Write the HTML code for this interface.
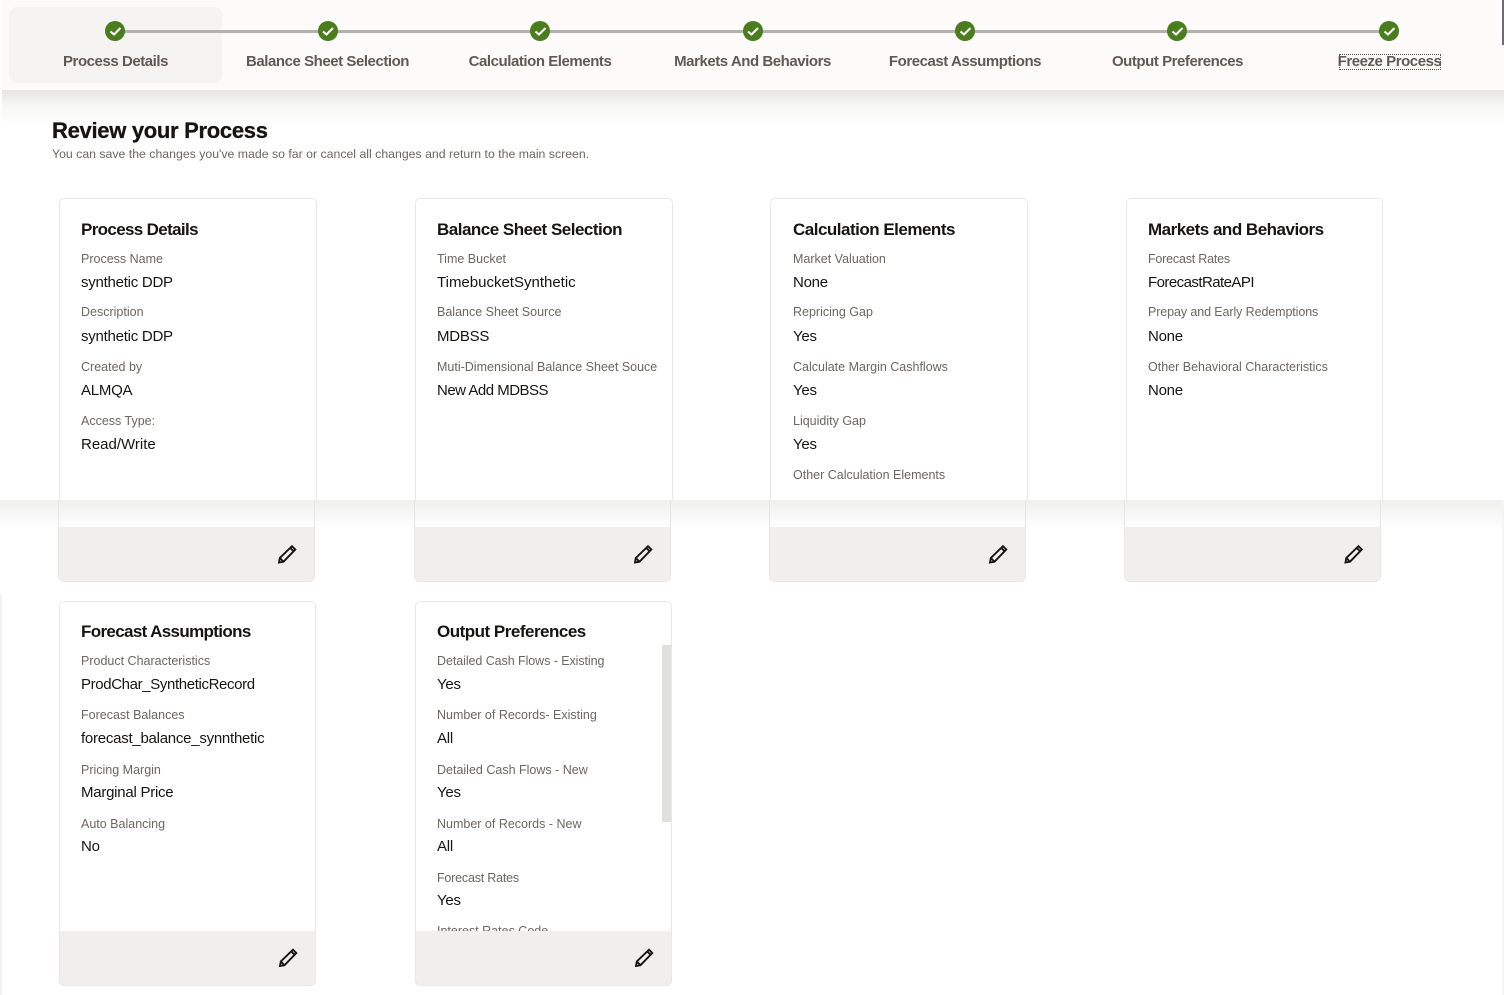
<!DOCTYPE html>
<html><head><meta charset="utf-8"><style>
html,body{margin:0;padding:0;background:#fff}
#p{position:relative;width:1504px;height:995px;overflow:hidden;background:#fff;font-family:"Liberation Sans",sans-serif}
#p div,#p svg{position:absolute}
.t{white-space:nowrap;height:20px;line-height:20px}
.s{font-size:15px;font-weight:bold;letter-spacing:-.45px;color:#5f5a56;text-align:center;width:212px;top:51px}
.h{font-size:17px;font-weight:bold;letter-spacing:-.5px;color:#161513;margin-top:1px}
.l{font-size:12.5px;color:#6b6762;margin-top:1px}
.v{font-size:15px;letter-spacing:-.25px;color:#161513;margin-top:1px}
.c{background:#fff;border:1px solid #e9e8e6;box-sizing:border-box}
.f{background:#f0efed;box-sizing:border-box;border:1px solid #e9e8e6;border-top:0}
.b{border:1px solid #e6e5e3;border-bottom:0;border-top:0;box-sizing:border-box}
.dot{width:20px;height:20px;border-radius:50%;background:#4a7d1e;top:21px}
</style></head><body><div id="p">
<!-- top shadow -->
<div style="left:2px;top:90px;width:1502px;height:36px;background:linear-gradient(#e6e5e4,#f6f6f5 40%,#fff)"></div>
<div style="left:2px;top:0;width:1502px;height:90px;background:#fcfbf9"></div>
<div style="left:1502px;top:0;width:2px;height:45px;background:#6a6a86"></div>
<div style="left:9px;top:7px;width:213px;height:76px;border-radius:8px;background:#f5f4f2"></div>
<div style="left:115px;top:30px;width:1274px;height:3px;background:#b3b1ae"></div>
<div class="dot" style="left:105px"></div><div class="dot" style="left:317.500px"></div><div class="dot" style="left:530px"></div><div class="dot" style="left:742.500px"></div><div class="dot" style="left:955px"></div><div class="dot" style="left:1167px"></div><div class="dot" style="left:1379px"></div>
<svg width="1504" height="60" style="left:0;top:0" fill="none" stroke="#fff" stroke-width="2"><path d="M110.500 31.500l3.500 3 6.500-6.500M323 31.500l3.500 3 6.500-6.500M535.500 31.500l3.500 3 6.500-6.500M748 31.500l3.500 3 6.500-6.500M960.500 31.500l3.500 3 6.500-6.500M1172.500 31.500l3.500 3 6.500-6.500M1384.500 31.500l3.500 3 6.500-6.500"/></svg>
<div class="t s" style="left:9.500px;margin-top:1px">Process Details</div>
<div class="t s" style="left:221.500px;margin-top:1px">Balance Sheet Selection</div>
<div class="t s" style="left:434px;margin-top:1px">Calculation Elements</div>
<div class="t s" style="left:646.500px;margin-top:1px">Markets And Behaviors</div>
<div class="t s" style="left:859px;margin-top:1px">Forecast Assumptions</div>
<div class="t s" style="left:1071.500px;margin-top:1px">Output Preferences</div>
<div class="t s" style="left:1283.500px;margin-top:1px">Freeze Process</div>
<div style="left:1339px;top:54px;width:102px;height:16px;border:1px dotted #555;box-sizing:border-box"></div>

<div class="t" style="left:52px;top:121px;font-size:22px;font-weight:bold;letter-spacing:-.3px;-webkit-text-stroke:.3px #161513;color:#161513">Review your Process</div>
<div class="t" style="left:52px;top:144px;font-size:12.300px;color:#6b6762">You can save the changes you've made so far or cancel all changes and return to the main screen.</div>

<!-- row 1 top -->
<div class="c" style="left:59px;top:198px;width:258px;height:320px;border-radius:5px 5px 0 0"></div>
<div class="c" style="left:415px;top:198px;width:258px;height:320px;border-radius:5px 5px 0 0"></div>
<div class="c" style="left:770px;top:198px;width:258px;height:320px;border-radius:5px 5px 0 0"></div>
<div class="c" style="left:1126px;top:198px;width:257px;height:320px;border-radius:5px 5px 0 0"></div>

<div class="t h" style="left:81px;top:219px;letter-spacing:-.65px">Process Details</div>
<div class="t l" style="left:81px;top:248px">Process Name</div><div class="t v" style="left:81px;top:272px">synthetic DDP</div>
<div class="t l" style="left:81px;top:302px;margin-top:0">Description</div><div class="t v" style="left:81px;top:326px">synthetic DDP</div>
<div class="t l" style="left:81px;top:357px;margin-top:0">Created by</div><div class="t v" style="left:81px;top:380px">ALMQA</div>
<div class="t l" style="left:81px;top:411px;margin-top:0">Access Type:</div><div class="t v" style="left:81px;top:434px;letter-spacing:0">Read/Write</div>

<div class="t h" style="left:437px;top:219px">Balance Sheet Selection</div>
<div class="t l" style="left:437px;top:248px">Time Bucket</div><div class="t v" style="left:437px;top:272px;letter-spacing:0">TimebucketSynthetic</div>
<div class="t l" style="left:437px;top:302px;margin-top:0">Balance Sheet Source</div><div class="t v" style="left:437px;top:326px">MDBSS</div>
<div class="t l" style="left:437px;top:357px;margin-top:0">Muti-Dimensional Balance Sheet Souce</div><div class="t v" style="left:437px;top:380px;letter-spacing:-.5px">New Add MDBSS</div>

<div class="t h" style="left:793px;top:219px">Calculation Elements</div>
<div class="t l" style="left:793px;top:248px">Market Valuation</div><div class="t v" style="left:793px;top:272px">None</div>
<div class="t l" style="left:793px;top:302px;margin-top:0">Repricing Gap</div><div class="t v" style="left:793px;top:326px">Yes</div>
<div class="t l" style="left:793px;top:357px;margin-top:0">Calculate Margin Cashflows</div><div class="t v" style="left:793px;top:380px">Yes</div>
<div class="t l" style="left:793px;top:411px;margin-top:0">Liquidity Gap</div><div class="t v" style="left:793px;top:434px">Yes</div>
<div class="t l" style="left:793px;top:465px;margin-top:0">Other Calculation Elements</div>

<div class="t h" style="left:1148px;top:219px">Markets and Behaviors</div>
<div class="t l" style="left:1148px;top:248px;letter-spacing:-.2px">Forecast Rates</div><div class="t v" style="left:1148px;top:272px;letter-spacing:-.55px">ForecastRateAPI</div>
<div class="t l" style="left:1148px;top:302px;margin-top:0;letter-spacing:-.1px">Prepay and Early Redemptions</div><div class="t v" style="left:1148px;top:326px">None</div>
<div class="t l" style="left:1148px;top:357px;margin-top:0">Other Behavioral Characteristics</div><div class="t v" style="left:1148px;top:380px">None</div>

<!-- seam band -->
<div style="left:0;top:500px;width:1504px;height:30px;background:linear-gradient(#efefee,#fbfbfb 70%,#fff)"></div>
<div class="b" style="left:58px;top:500px;width:257px;height:27px"></div>
<div class="b" style="left:414px;top:500px;width:257px;height:27px"></div>
<div class="b" style="left:769px;top:500px;width:257px;height:27px"></div>
<div class="b" style="left:1124px;top:500px;width:257px;height:27px"></div>
<div class="f" style="left:58px;top:527px;width:257px;height:55px;border-radius:0 0 6px 6px"></div>
<div class="f" style="left:414px;top:527px;width:257px;height:55px;border-radius:0 0 6px 6px"></div>
<div class="f" style="left:769px;top:527px;width:257px;height:55px;border-radius:0 0 6px 6px"></div>
<div class="f" style="left:1124px;top:527px;width:257px;height:55px;border-radius:0 0 6px 6px"></div>
<div style="left:0;top:594px;width:2px;height:401px;background:#f3f3f3"></div>
<div style="left:1502px;top:500px;width:2px;height:495px;background:#f4f4f4"></div>

<!-- row 2 -->
<div class="c" style="left:59px;top:601px;width:257px;height:385px;border-radius:5px"></div>
<div class="c" style="left:415px;top:601px;width:257px;height:385px;border-radius:5px"></div>

<div class="t h" style="left:81px;top:621px;letter-spacing:-.65px">Forecast Assumptions</div>
<div class="t l" style="left:81px;top:650px">Product Characteristics</div><div class="t v" style="left:81px;top:674px;letter-spacing:-.37px">ProdChar_SyntheticRecord</div>
<div class="t l" style="left:81px;top:704px">Forecast Balances</div><div class="t v" style="left:81px;top:728px">forecast_balance_synnthetic</div>
<div class="t l" style="left:81px;top:759px">Pricing Margin</div><div class="t v" style="left:81px;top:782px">Marginal Price</div>
<div class="t l" style="left:81px;top:813px">Auto Balancing</div><div class="t v" style="left:81px;top:836px">No</div>

<div class="t h" style="left:437px;top:621px">Output Preferences</div>
<div class="t l" style="left:437px;top:650px;letter-spacing:-.07px">Detailed Cash Flows - Existing</div><div class="t v" style="left:437px;top:674px">Yes</div>
<div class="t l" style="left:437px;top:704px">Number of Records- Existing</div><div class="t v" style="left:437px;top:728px">All</div>
<div class="t l" style="left:437px;top:759px">Detailed Cash Flows - New</div><div class="t v" style="left:437px;top:782px">Yes</div>
<div class="t l" style="left:437px;top:813px">Number of Records - New</div><div class="t v" style="left:437px;top:836px">All</div>
<div class="t l" style="left:437px;top:867px;letter-spacing:-.2px">Forecast Rates</div><div class="t v" style="left:437px;top:890px">Yes</div>
<div class="t l" style="left:437px;top:920px">Interest Rates Code</div>
<div style="left:662px;top:645px;width:9px;height:177px;background:#e0e0de"></div>
<div class="f" style="left:59px;top:931px;width:257px;height:55px;border-radius:0 0 6px 6px"></div>
<div class="f" style="left:415px;top:931px;width:257px;height:55px;border-radius:0 0 6px 6px"></div>

<svg width="1504" height="995" style="left:0;top:0" fill="none" stroke="#161513" stroke-width="1.900" stroke-linejoin="miter">
<defs><g id="pn"><path d="M-8 8l.8-4.500L5-8.300 8.300-5-3.500 7.200z"/><path d="M3.300-6.500l3.300 3.300M-7 3.700l3.300 3.300"/></g></defs>
<use href="#pn" x="287" y="554.500"/><use href="#pn" x="643" y="554.500"/><use href="#pn" x="998" y="554.500"/><use href="#pn" x="1353.500" y="554.500"/><use href="#pn" x="288" y="958"/><use href="#pn" x="644" y="958"/>
</svg>
</div></body></html>
